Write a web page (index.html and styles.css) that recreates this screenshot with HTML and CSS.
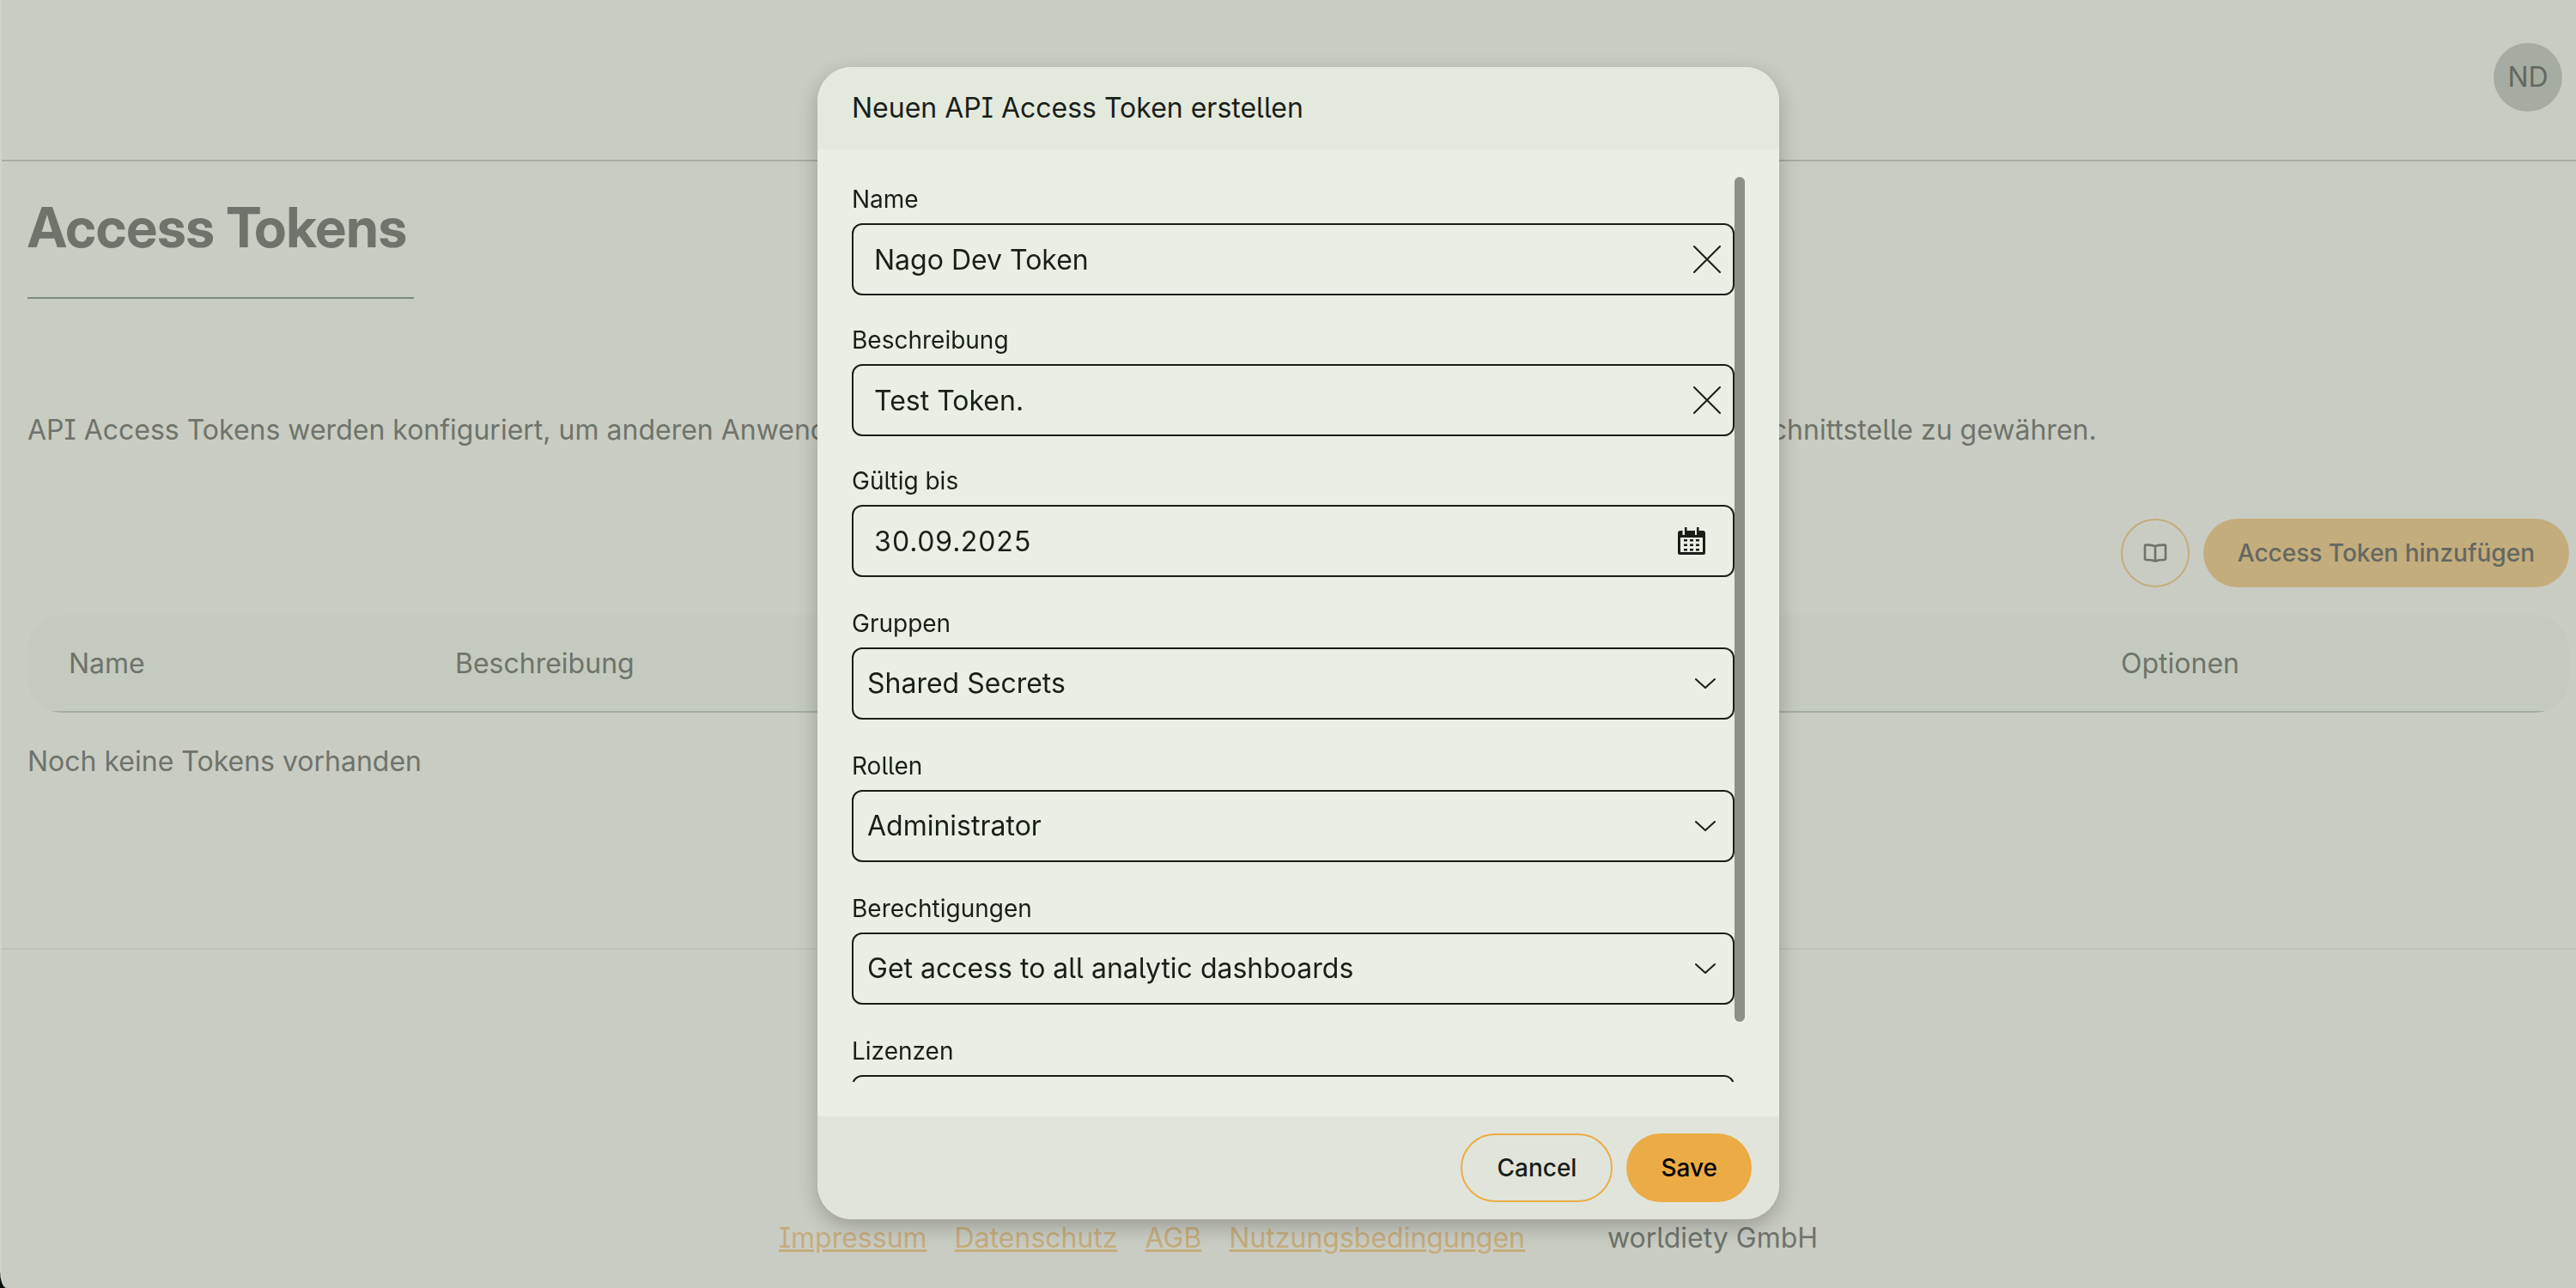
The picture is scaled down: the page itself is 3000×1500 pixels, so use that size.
FILE: index.html
```html
<!DOCTYPE html>
<html lang="de">
<head>
<meta charset="utf-8">
<meta name="viewport" content="width=device-width, initial-scale=1">
<title>Access Tokens</title>
<link rel="stylesheet" href="styles.css">
</head>
<body>
<div class="page">
  <header class="topbar">
    <button class="avatar" type="button">ND</button>
  </header>

  <main class="content">
    <h1 class="title">Access Tokens</h1>
    <p class="intro">API Access Tokens werden konfiguriert, um anderen Anwendungen oder Diensten den programmatischen Zugriff auf unsere interne Schnittstelle zu gewähren.</p>

    <div class="actions">
      <button class="icon-button" type="button" aria-label="Dokumentation">
        <svg class="book" viewBox="0 0 24 24" aria-hidden="true"><path d="M12 6.03v13m0-13c-2.819-.831-4.715-1.076-8.029-1.023A.99.99 0 0 0 3 6v11c0 .563.466 1.014 1.03 1.007 3.122-.043 5.018.212 7.97 1.023m0-13c2.819-.831 4.715-1.076 8.029-1.023A.99.99 0 0 1 21 6v11c0 .563-.466 1.014-1.03 1.007-3.122-.043-5.018.212-7.97 1.023"/></svg>
      </button>
      <button class="add-button" type="button">Access Token hinzufügen</button>
    </div>

    <table class="tokens">
      <thead>
        <tr><th class="col-name">Name</th><th class="col-text">Beschreibung</th><th>Optionen</th></tr>
      </thead>
      <tbody>
        <tr><td colspan="3">Noch keine Tokens vorhanden</td></tr>
      </tbody>
    </table>
  </main>

  <footer class="footer">
    <nav class="links">
      <a href="#impressum">Impressum</a>
      <a href="#datenschutz">Datenschutz</a>
      <a href="#agb">AGB</a>
      <a href="#nutzungsbedingungen">Nutzungsbedingungen</a>
    </nav>
    <span>worldiety GmbH</span>
  </footer>
</div>

<div class="overlay">
  <section class="dialog" role="dialog" aria-modal="true" aria-labelledby="dialog-title">
    <h2 class="dialog-title" id="dialog-title">Neuen API Access Token erstellen</h2>
    <div class="dialog-body">
      <form class="form" id="token-form">
        <div class="field">
          <label for="name">Name</label>
          <div class="box">
            <input id="name" type="text" value="Nago Dev Token">
            <button class="clear" type="button" aria-label="Name leeren"><svg viewBox="0 0 32 32" aria-hidden="true"><path d="M1 1L31 31M31 1L1 31"/></svg></button>
          </div>
        </div>
        <div class="field">
          <label for="description">Beschreibung</label>
          <div class="box">
            <input id="description" type="text" value="Test Token.">
            <button class="clear" type="button" aria-label="Beschreibung leeren"><svg viewBox="0 0 32 32" aria-hidden="true"><path d="M1 1L31 31M31 1L1 31"/></svg></button>
          </div>
        </div>
        <div class="field">
          <label for="valid">Gültig bis</label>
          <div class="box box-date">
            <input id="valid" type="text" value="30.09.2025">
            <button class="calendar" type="button" aria-label="Kalender öffnen"><svg viewBox="0 0 32 32" aria-hidden="true"><path fill-rule="evenodd" d="M3 4h2.500v5H8V0h2.500v4H20v5h2V0h2.500v4H29a3 3 0 0 1 3 3v23a2 2 0 0 1-2 2H2a2 2 0 0 1-2-2V7a3 3 0 0 1 3-3zM3 12v17h26V12z"/><path d="M7 14h4v2.500H7zM14 14h4v2.500h-4zM21 14h4v2.500h-4zM7 19.500h4V22H7zM14 19.500h4V22h-4zM21 19.500h4V22h-4zM7 25h4v2.500H7zM14 25h4v2.500h-4zM21 25h4v2.500h-4z"/></svg></button>
          </div>
        </div>
        <div class="field field-select">
          <label for="groups">Gruppen</label>
          <div class="box box-select">
            <select id="groups"><option>Shared Secrets</option></select>
            <svg class="chevron" viewBox="0 0 24 12" aria-hidden="true"><path d="M1 1l11 10L23 1"/></svg>
          </div>
        </div>
        <div class="field field-select">
          <label for="roles">Rollen</label>
          <div class="box box-select">
            <select id="roles"><option>Administrator</option></select>
            <svg class="chevron" viewBox="0 0 24 12" aria-hidden="true"><path d="M1 1l11 10L23 1"/></svg>
          </div>
        </div>
        <div class="field field-select">
          <label for="permissions">Berechtigungen</label>
          <div class="box box-select">
            <select id="permissions"><option>Get access to all analytic dashboards</option></select>
            <svg class="chevron" viewBox="0 0 24 12" aria-hidden="true"><path d="M1 1l11 10L23 1"/></svg>
          </div>
        </div>
        <div class="field field-select">
          <label for="licenses">Lizenzen</label>
          <div class="box box-select">
            <select id="licenses"><option></option></select>
            <svg class="chevron" viewBox="0 0 24 12" aria-hidden="true"><path d="M1 1l11 10L23 1"/></svg>
          </div>
        </div>
      </form>
      <div class="track"><div class="thumb"></div></div>
    </div>
    <div class="dialog-footer">
      <button class="cancel" type="button">Cancel</button>
      <button class="save" type="submit" form="token-form">Save</button>
    </div>
  </section>
</div>
</body>
</html>
```
FILE: styles.css
```css
* {
  box-sizing: border-box;
}

html {
  background: #07110c;
}

body {
  margin: 0;
  font: 400 32px/48px Inter, "Liberation Sans", sans-serif;
  font-feature-settings: "cv05", "cv08";
  color: #6f736b;
}

button,
input,
select {
  margin: 0;
  padding: 0;
  border: 0;
  background: none;
  font: inherit;
  font-feature-settings: inherit;
  color: inherit;
}

.page {
  display: flex;
  flex-direction: column;
  min-height: 100vh;
  background: #c9ccc3;
  border-left: 2px solid #d0d3cb;
  border-bottom-left-radius: 8px 20px;
}

.topbar {
  display: flex;
  justify-content: flex-end;
  padding: 50px 16px 56px;
  border-bottom: 2px solid #a8aba2;
}

.avatar {
  width: 80px;
  height: 80px;
  border-radius: 50%;
  background: #a6aca1;
  color: #646861;
}

.content {
  flex: 1;
  padding: 32px 8px 0 30px;
}

.title {
  width: fit-content;
  margin: 0;
  padding: 4px 8px 40px 0;
  border-bottom: 2px solid #778f7e;
  font-family: "Inter Display", Inter, "Liberation Sans", sans-serif;
  font-size: 64px;
  line-height: 82px;
  font-weight: 700;
}

.intro {
  margin: 129px 0 79px;
  white-space: nowrap;
}

.actions {
  display: flex;
  justify-content: flex-end;
  gap: 16px;
  margin-bottom: 32px;
  font-size: 28px;
  font-weight: 500;
}

.icon-button {
  display: grid;
  place-items: center;
  width: 80px;
  height: 80px;
  border: 2px solid #c4ad7d;
  border-radius: 50%;
}

.book {
  width: 32px;
  height: 32px;
  fill: none;
  stroke: #6f736b;
  stroke-width: 2;
  stroke-linecap: round;
  stroke-linejoin: round;
}

.add-button {
  height: 80px;
  padding: 0 40px;
  border-radius: 40px;
  background: #c4ad7d;
  color: #646861;
}

.tokens {
  width: 100%;
  border-collapse: separate;
  border-spacing: 0;
  table-layout: fixed;
}

.tokens th {
  height: 114px;
  padding: 2px 0 0;
  background: #c4cabf;
  border-bottom: 2px solid #a5aca1;
  font-weight: 400;
  text-align: left;
}

.tokens thead {
  clip-path: inset(0 round 40px);
}

.tokens .col-name {
  width: 498px;
  padding-left: 48px;
}

.tokens .col-text {
  width: 1940px;
}

.tokens td {
  padding: 33px 0;
}

.footer {
  display: flex;
  justify-content: center;
  gap: 96px;
  padding: 312px 8px 34px 30px;
  border-top: 2px solid #bfc2b9;
}

.links {
  display: flex;
  gap: 32px;
}

.links a {
  color: #c4ad7d;
}

.overlay {
  position: fixed;
  inset: 0;
  display: grid;
  place-items: center;
  padding: 0 0 2px 24px;
}

.dialog {
  display: flex;
  flex-direction: column;
  width: 1120px;
  max-width: 100%;
  border-radius: 40px;
  overflow: hidden;
  background: #e9efe4;
  color: #1a1e19;
  box-shadow: 0 8px 24px rgba(0, 0, 0, 0.24);
}

.dialog-title {
  margin: 0;
  padding: 24px 40px;
  background: #e4e9de;
  font-size: 32px;
  font-weight: 400;
}

.dialog-body {
  display: flex;
  height: calc(100vh - 374px);
  padding: 32px 40px 40px;
}

.form {
  display: flex;
  flex: 1;
  flex-direction: column;
  gap: 32px;
  padding-top: 6px;
  overflow: hidden;
}

.track {
  width: 12px;
}

.thumb {
  height: 984px;
  border-radius: 6px;
  background: #8c9187;
}

.field {
  display: flex;
  flex: none;
  flex-direction: column;
  gap: 8px;
}

.field-select {
  padding-top: 2px;
}

.field label {
  font-size: 28px;
  line-height: 40px;
}

.box {
  display: flex;
  align-items: center;
  height: 84px;
  padding: 0 14px 0 24px;
  border: 2px solid #1a1e19;
  border-radius: 12px;
}

.box-date {
  padding-right: 32px;
  font-feature-settings: "tnum";
}

.box-select {
  padding: 0 20px 0 16px;
}

.box input,
.box select {
  flex: 1;
  min-width: 0;
  height: 80px;
  appearance: none;
  outline: none;
}

.clear,
.calendar,
.clear svg,
.calendar svg {
  display: block;
  width: 32px;
  height: 32px;
}

.clear svg,
.chevron {
  fill: none;
  stroke: #1a1e19;
  stroke-width: 2;
  stroke-linecap: round;
  stroke-linejoin: round;
}

.calendar svg {
  fill: #1a1e19;
}

.chevron {
  width: 24px;
  height: 12px;
}

.dialog-footer {
  display: flex;
  justify-content: flex-end;
  gap: 16px;
  padding: 20px 32px;
  background: #e1e4da;
  font-size: 28px;
  font-weight: 500;
  font-feature-settings: normal;
}

.cancel,
.save {
  height: 80px;
  padding: 0 40px;
  border-radius: 40px;
}

.cancel {
  border: 2px solid #ebac45;
}

.save {
  background: #ebac45;
  color: #000;
}
```
